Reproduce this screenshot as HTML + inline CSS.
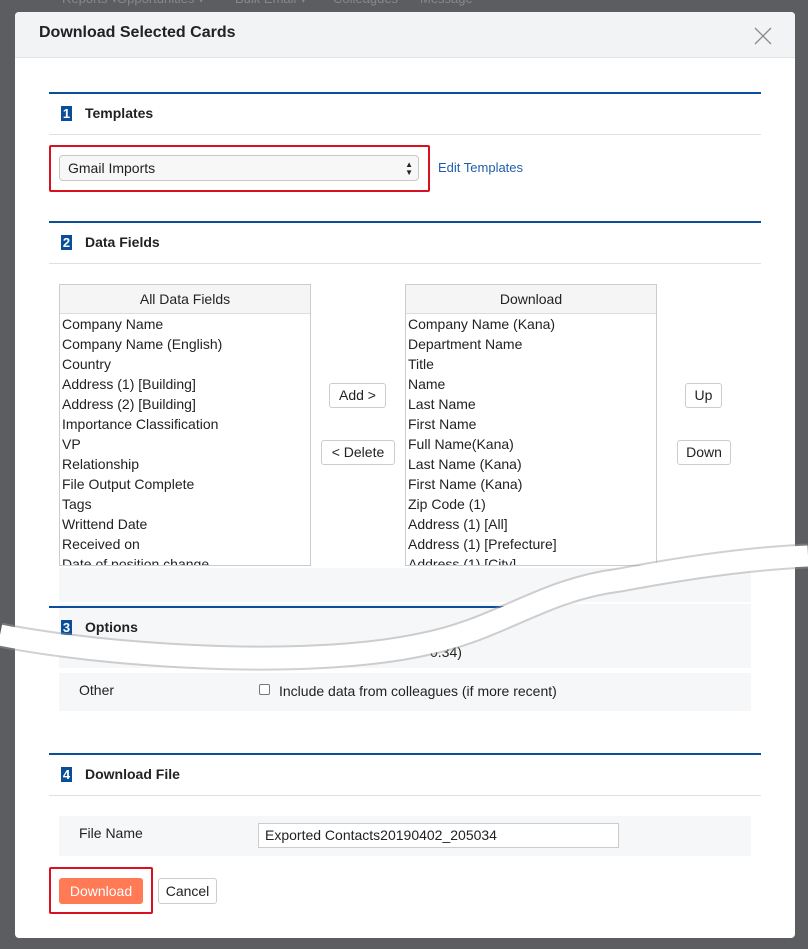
<!DOCTYPE html>
<html><head><meta charset="utf-8"><style>
*{box-sizing:border-box;margin:0;padding:0}
body{width:808px;height:949px;background:#5b5d61;position:relative;overflow:hidden;font-family:"Liberation Sans",sans-serif;font-size:14px;color:#222}
.a{position:absolute}
.modal{left:15px;top:12px;width:780px;height:926px;background:#fff;border-radius:4px}
.hdr{left:15px;top:12px;width:780px;height:46px;background:#f2f3f5;border-bottom:1px solid #e2e3e5;border-radius:4px 4px 0 0}
.bl{height:2px;background:#0a4e98;left:49px;width:712px}
.gl{height:1px;background:#e0e0e0;left:49px;width:712px}
.num{width:11px;height:15px;background:#0a4e98;color:#fff;font-size:13px;font-weight:bold;text-align:center;line-height:15px}
.st{font-weight:bold;font-size:14px}
.box{border:1px solid #ccc;background:#fff;width:252px;height:282px;overflow:hidden}
.box .h{height:29px;background:#f5f5f5;border-bottom:1px solid #ddd;text-align:center;line-height:28px;font-size:14px}
.box div.i{height:20px;line-height:20px;padding-left:2px;font-size:14px}
.btn{border:1px solid #ccc;border-radius:3px;background:#fff;text-align:center;line-height:23px;height:25px;font-size:14px}
.gray{background:#f6f7f9}
.nav{position:absolute;top:-9px;color:#888;font-size:13px}
</style></head><body>
<div class="nav" style="left:62px">Reports ▾</div>
<div class="nav" style="left:117px">Opportunities ▾</div>
<div class="nav" style="left:235px">Bulk Email ▾</div>
<div class="nav" style="left:333px">Colleagues</div>
<div class="nav" style="left:420px">Message</div>
<div class="a modal"></div>
<div class="a hdr"></div>
<div class="a" style="left:39px;top:24px;font-size:16px;font-weight:bold">Download Selected Cards</div>
<svg class="a" style="left:753px;top:26px" width="20" height="20"><path d="M2 2L18 18M18 2L2 18" stroke="#888" stroke-width="1.3"/></svg>

<div class="a bl" style="top:92px"></div>
<div class="a num" style="left:61px;top:106px">1</div>
<div class="a st" style="left:85px;top:105px">Templates</div>
<div class="a gl" style="top:134px"></div>
<div class="a" style="left:49px;top:145px;width:381px;height:47px;border:2px solid #d9101f;border-radius:2px"></div>
<div class="a" style="left:59px;top:155px;width:360px;height:26px;border:1px solid #c8c8c8;border-radius:4px;background:#f7f7f7;line-height:24px;padding-left:8px">Gmail Imports<span style="position:absolute;right:5px;font-size:8px;line-height:8px;top:5px">▲<br>▼</span></div>
<div class="a" style="left:438px;top:160px;color:#1f5fa8;font-size:13px">Edit Templates</div>

<div class="a bl" style="top:221px"></div>
<div class="a num" style="left:61px;top:235px">2</div>
<div class="a st" style="left:85px;top:234px">Data Fields</div>
<div class="a gl" style="top:263px"></div>

<div class="a box" style="left:59px;top:284px"><div class="h">All Data Fields</div><div>
<div class="i">Company Name</div><div class="i">Company Name (English)</div><div class="i">Country</div><div class="i">Address (1) [Building]</div><div class="i">Address (2) [Building]</div><div class="i">Importance Classification</div><div class="i">VP</div><div class="i">Relationship</div><div class="i">File Output Complete</div><div class="i">Tags</div><div class="i">Writtend Date</div><div class="i">Received on</div><div class="i">Date of position change</div></div></div>
<div class="a box" style="left:405px;top:284px"><div class="h">Download</div><div>
<div class="i">Company Name (Kana)</div><div class="i">Department Name</div><div class="i">Title</div><div class="i">Name</div><div class="i">Last Name</div><div class="i">First Name</div><div class="i">Full Name(Kana)</div><div class="i">Last Name (Kana)</div><div class="i">First Name (Kana)</div><div class="i">Zip Code (1)</div><div class="i">Address (1) [All]</div><div class="i">Address (1) [Prefecture]</div><div class="i">Address (1) [City]</div></div></div>
<div class="a btn" style="left:329px;top:383px;width:57px">Add &gt;</div>
<div class="a btn" style="left:321px;top:440px;width:74px">&lt; Delete</div>
<div class="a btn" style="left:685px;top:383px;width:37px">Up</div>
<div class="a btn" style="left:677px;top:440px;width:54px">Down</div>

<div class="a gray" style="left:59px;top:568px;width:692px;height:34px"></div>
<div class="a gray" style="left:59px;top:604px;width:692px;height:64px"></div>
<div class="a" style="left:430px;top:644px">0.34)</div>
<div class="a bl" style="top:606px;width:470px"></div>
<div class="a num" style="left:61px;top:620px">3</div>
<div class="a st" style="left:85px;top:619px">Options</div>
<div class="a gray" style="left:59px;top:673px;width:692px;height:38px"></div>
<div class="a" style="left:79px;top:682px">Other</div>
<div class="a" style="left:259px;top:684px;width:11px;height:11px;border:1px solid #777;border-radius:2px;background:#fff"></div>
<div class="a" style="left:279px;top:683px">Include data from colleagues (if more recent)</div>

<svg class="a" style="left:0;top:520px" width="808" height="170">
<path d="M0 115 C100 135 300 150 420 125 C500 110 540 70 620 60 C700 45 760 38 808 36" fill="none" stroke="#999" stroke-width="25" opacity=".45"/>
<path d="M0 115 C100 135 300 150 420 125 C500 110 540 70 620 60 C700 45 760 38 808 36" fill="none" stroke="#fff" stroke-width="21"/>
</svg>

<div class="a bl" style="top:753px"></div>
<div class="a num" style="left:61px;top:767px">4</div>
<div class="a st" style="left:85px;top:766px">Download File</div>
<div class="a gl" style="top:795px"></div>
<div class="a gray" style="left:59px;top:816px;width:692px;height:40px"></div>
<div class="a" style="left:79px;top:825px">File Name</div>
<div class="a" style="left:258px;top:823px;width:361px;height:25px;border:1px solid #ccc;background:#fff;line-height:23px;padding-left:6px">Exported Contacts20190402_205034</div>
<div class="a" style="left:49px;top:867px;width:104px;height:47px;border:2px solid #d9101f;border-radius:2px"></div>
<div class="a" style="left:59px;top:878px;width:84px;height:26px;background:#ff7a55;border-radius:3px;color:#fff;text-align:center;line-height:26px">Download</div>
<div class="a btn" style="left:158px;top:878px;width:59px;height:26px;line-height:24px">Cancel</div>
</body></html>
